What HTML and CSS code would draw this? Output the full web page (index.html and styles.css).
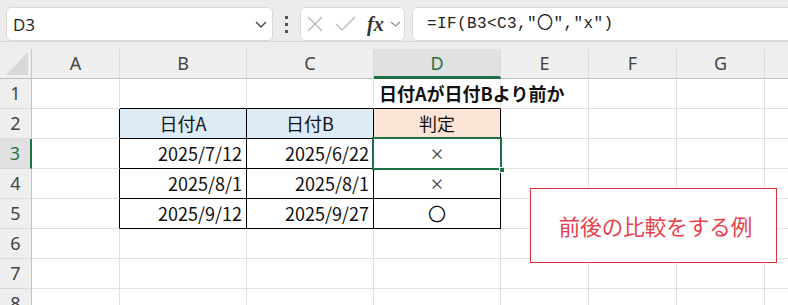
FILE: index.html
```html
<!DOCTYPE html>
<html lang="ja">
<head>
<meta charset="utf-8">
<link rel="stylesheet" href="styles.css">
</head>
<body>
<div class="toolbar">
  <div class="namebox">
    <span class="ref">D3</span>
    <svg class="chev" width="12" height="7" viewBox="0 0 12 7"><path d="M1 1 L6 6 L11 1" fill="none" stroke="#444" stroke-width="1.4"/></svg>
  </div>
  <div class="grip"><i></i><i></i><i></i></div>
  <div class="fxbox">
    <svg class="ico" width="16" height="16" viewBox="0 0 16 16"><path d="M1 1 L15 15 M15 1 L1 15" stroke="#b4b4b4" stroke-width="1.2" fill="none"/></svg>
    <svg class="ico" width="21" height="16" viewBox="0 0 21 16"><path d="M1 8 L7 14 L20 1" stroke="#b4b4b4" stroke-width="1.2" fill="none"/></svg>
    <span class="fx">fx</span>
    <svg class="chev2" width="11" height="6" viewBox="0 0 11 6"><path d="M1 1 L5.5 5 L10 1" fill="none" stroke="#8a8a8a" stroke-width="1.1"/></svg>
  </div>
  <div class="formula">=IF(B3&lt;C3,"〇","x")</div>
</div>
<div class="strip"></div>
<div class="sheet">
  <div class="hd corner"><span class="tri"></span></div>
  <div class="hd">A</div>
  <div class="hd">B</div>
  <div class="hd">C</div>
  <div class="hd act">D</div>
  <div class="hd">E</div>
  <div class="hd">F</div>
  <div class="hd">G</div>
  <div class="hd last"></div>

  <div class="rh">1</div>
  <div class="c"></div>
  <div class="c tb"></div>
  <div class="c tb"></div>
  <div class="c tb title">日付Aが日付Bより前か</div>
  <div class="c"></div>
  <div class="c"></div>
  <div class="c"></div>
  <div class="c"></div>

  <div class="rh">2</div>
  <div class="c tl"></div>
  <div class="c k blue ctr">日付A</div>
  <div class="c k blue ctr">日付B</div>
  <div class="c k peach ctr">判定</div>
  <div class="c"></div>
  <div class="c"></div>
  <div class="c"></div>
  <div class="c"></div>

  <div class="rh act">3</div>
  <div class="c tl"></div>
  <div class="c k num">2025/7/12</div>
  <div class="c k num">2025/6/22</div>
  <div class="c k ctr sel"><span class="mark">×</span><span class="selbox"><span class="handle"></span></span></div>
  <div class="c"></div>
  <div class="c"></div>
  <div class="c"></div>
  <div class="c"></div>

  <div class="rh">4</div>
  <div class="c tl"></div>
  <div class="c k num">2025/8/1</div>
  <div class="c k num">2025/8/1</div>
  <div class="c k ctr"><span class="mark">×</span></div>
  <div class="c"></div>
  <div class="c"></div>
  <div class="c"></div>
  <div class="c"></div>

  <div class="rh">5</div>
  <div class="c tl"></div>
  <div class="c k num">2025/9/12</div>
  <div class="c k num">2025/9/27</div>
  <div class="c k ctr">〇</div>
  <div class="c"></div>
  <div class="c"></div>
  <div class="c"></div>
  <div class="c"></div>

  <div class="rh">6</div>
  <div class="c"></div><div class="c"></div><div class="c"></div><div class="c"></div><div class="c"></div><div class="c"></div><div class="c"></div><div class="c"></div>
  <div class="rh">7</div>
  <div class="c"></div><div class="c"></div><div class="c"></div><div class="c"></div><div class="c"></div><div class="c"></div><div class="c"></div><div class="c"></div>
  <div class="rh">8</div>
  <div class="c"></div><div class="c"></div><div class="c"></div><div class="c"></div><div class="c"></div><div class="c"></div><div class="c"></div><div class="c"></div>

  <div class="note">前後の比較をする例</div>
</div>
</body>
</html>
```

FILE: styles.css
```css
* { box-sizing: border-box; }
html, body { margin: 0; padding: 0; }
body {
  width: 788px;
  height: 305px;
  overflow: hidden;
  background: #ffffff;
  font-family: "Noto Sans CJK JP", "Noto Sans", sans-serif;
}
.toolbar {
  height: 42px;
  background: #ececec;
  border-bottom: 1px solid #d6d6d6;
  display: flex;
  align-items: flex-start;
  padding: 7px 0 0 6px;
  white-space: nowrap;
}
.namebox, .fxbox, .formula {
  height: 34px;
  background: #ffffff;
  border: 1px solid #d9d9d9;
  border-radius: 5px;
}
.namebox {
  width: 267px;
  display: flex;
  align-items: center;
  justify-content: space-between;
  padding: 0 5px 0 6px;
}
.ref {
  font-family: "Open Sans", "Noto Sans", sans-serif;
  font-size: 17px;
  color: #222;
}
.grip {
  width: 27px;
  height: 34px;
  display: flex;
  flex-direction: column;
  align-items: center;
  justify-content: center;
  gap: 4px;
}
.grip i {
  display: block;
  width: 3px;
  height: 3px;
  background: #555;
}
.fxbox {
  width: 105px;
  display: flex;
  align-items: center;
  padding: 0 0 0 6px;
}
.fxbox .ico { margin-right: 12px; }
.fxbox .ico + .ico { margin-right: 11px; }
.fx {
  font-family: "Liberation Serif", "DejaVu Serif", serif;
  font-style: italic;
  font-weight: bold;
  font-size: 20px;
  color: #333;
  margin-right: 6px;
  line-height: 1;
}
.formula {
  flex: 1;
  margin-left: 7px;
  margin-right: -10px;
  padding-left: 14px;
  font-family: "Liberation Mono", "Noto Sans CJK JP", monospace;
  font-size: 16px;
  letter-spacing: 0.4px;
  line-height: 32px;
  color: #222;
}
.strip {
  height: 7px;
  background: #ececec;
}
.sheet {
  position: relative;
  display: grid;
  grid-template-columns: 32px 88px 127px 127px 127px 88px 88px 88px 40px;
  grid-auto-rows: 30px;
}
.hd {
  background: #efefef;
  border-right: 1px solid #dadada;
  border-bottom: 1px solid #bfbfbf;
  text-align: center;
  font-family: "Noto Sans", sans-serif;
  font-size: 18px;
  line-height: 29px;
  color: #444;
}
.hd.corner {
  position: relative;
  border-right: 1px solid #c4c4c4;
}
.tri {
  position: absolute;
  left: 6px;
  top: 3px;
  width: 0;
  height: 0;
  border-style: solid;
  border-width: 0 0 23px 22px;
  border-color: transparent transparent #d8d8d8 transparent;
}
.hd.act {
  background: #e1e1e1;
  color: #1e7145;
  border-bottom: 3px solid #1e7145;
}
.rh {
  background: #efefef;
  border-right: 1px solid #c4c4c4;
  border-bottom: 1px solid #dadada;
  text-align: center;
  font-family: "Noto Sans", sans-serif;
  font-size: 18px;
  line-height: 29px;
  color: #444;
}
.rh.act {
  background: #e1e1e1;
  color: #1e7145;
  border-right: 2px solid #1e7145;
}
.c {
  border-right: 1px solid #e1e1e1;
  border-bottom: 1px solid #e1e1e1;
  font-size: 18px;
  line-height: 29px;
  color: #111;
  white-space: nowrap;
  padding: 0 4px;
}
.c.tb { border-bottom-color: #000; }
.c.tl { border-right-color: #000; }
.c.k { border-right-color: #000; border-bottom-color: #000; }
.blue { background: #ddebf7; }
.peach { background: #fce4d6; }
.ctr { text-align: center; }
.num { text-align: right; }
.mark {
  font-family: "Noto Sans", sans-serif;
  font-size: 22px;
  font-weight: 300;
  color: #333;
}
.title {
  font-weight: bold;
  overflow: visible;
  padding-left: 5px;
}
.sel { position: relative; }
.selbox {
  position: absolute;
  left: -2px;
  top: -2px;
  width: 130px;
  height: 33px;
  border: 2px solid #1e7145;
}
.handle {
  position: absolute;
  right: -5px;
  bottom: -5px;
  width: 6px;
  height: 6px;
  background: #1e7145;
  border: 1px solid #fff;
}
.note {
  position: absolute;
  left: 530px;
  top: 139px;
  width: 247px;
  height: 75px;
  border: 1px solid #e0303a;
  background: #fff;
  display: flex;
  align-items: center;
  justify-content: center;
  color: #e8414b;
  font-size: 21.5px;
  padding-left: 4px;
}
```
